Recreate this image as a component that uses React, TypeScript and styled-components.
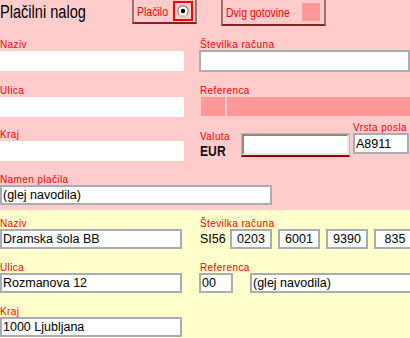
import React from "react";
import styled, { createGlobalStyle } from "styled-components";

const GlobalStyle = createGlobalStyle`
    html, body {
        margin: 0;
        padding: 0;
        background: #ffffcc;
    }
    body {
        font-family: "Liberation Sans", Arial, sans-serif;
    }
`;

const Page = styled.div`
    width: 410px;
    height: 338px;
    overflow: hidden;
    background: #ffffcc;
`;

const TopSection = styled.div`
    height: 210px;
    background: #ffcccc;
    overflow: hidden;
`;

const BottomSection = styled.div`
    padding-top: 9px;
    background: #ffffcc;
`;

const Header = styled.div`
    display: flex;
    align-items: flex-start;
    height: 40px;
`;

// narrow face is not installed, so the condensed look is squeezed by hand
const Narrow = styled.span`
    display: inline-block;
    white-space: nowrap;
    transform: scaleX(0.81);
    transform-origin: left center;
`;

const Title = styled.div`
    width: 132px;
    padding-top: 2px;
    font-size: 18px;
    line-height: 20px;
    color: #000;
`;

const ChoiceBox = styled.div<{ $w: number; $h: number }>`
    display: flex;
    align-items: center;
    box-sizing: border-box;
    width: ${(p) => p.$w}px;
    height: ${(p) => p.$h}px;
    padding: 0 2px 0 3px;
    border: 2px solid #a07070;
    border-bottom-color: #8a2020;
    border-top: none;
    font-size: 13px;
    color: #ff0000;

    ${Narrow} {
        flex: 1;
        min-width: 0;
    }
`;

const RadioFrame = styled.span`
    display: flex;
    align-items: center;
    justify-content: center;
    box-sizing: border-box;
    width: 20px;
    height: 20px;
    border: 2px solid #ff0000;
`;

const PinkSquare = styled.span`
    width: 18px;
    height: 18px;
    margin-right: 2px;
    background: #ff9999;
`;

const Row = styled.div<{ $mt?: number }>`
    display: flex;
    align-items: flex-start;
    margin-top: ${(p) => p.$mt ?? 0}px;
`;

const LeftCell = styled.div<{ $pt?: number }>`
    width: 199px;
    flex-shrink: 0;
    padding-top: ${(p) => p.$pt ?? 0}px;
`;

const RightCell = styled.div`
    flex: 1;
    display: flex;
    flex-direction: column;
`;

const Label = styled.div<{ $h?: number; $x?: number }>`
    height: ${(p) => p.$h ?? 10}px;
    padding-left: ${(p) => p.$x ?? 0}px;
    font-size: 10px;
    line-height: 10px;
    letter-spacing: 0.4px;
    color: #ff0000;
    white-space: nowrap;
`;

const Field = styled.input<{ $w: number; $h?: number; $bare?: boolean; $center?: boolean }>`
    display: block;
    box-sizing: border-box;
    width: ${(p) => p.$w}px;
    height: ${(p) => p.$h ?? 20}px;
    margin: 0;
    padding: 0 1px;
    border: ${(p) => (p.$bare ? "none" : "2px solid #a7adb2")};
    background: #fff;
    font-family: "Liberation Sans", Arial, sans-serif;
    font-size: 12.5px;
    color: #000;
    text-align: ${(p) => (p.$center ? "center" : "left")};
    outline: none;
    flex-shrink: 0;
`;

const RefBar = styled.div`
    display: flex;
    gap: 2px;
    height: 19px;
    margin-left: 2px;
`;

const RefPiece = styled.div<{ $w?: number }>`
    background: #ff9999;
    width: ${(p) => (p.$w ? `${p.$w}px` : "auto")};
    flex: ${(p) => (p.$w ? "none" : 1)};
`;

const CurrencyRow = styled.div`
    display: flex;
    align-items: flex-start;
`;

const CurrencyBlock = styled.div`
    width: 42px;
    padding-top: 9px;
`;

const Eur = styled.div`
    padding-left: 1px;
    font-weight: bold;
    font-size: 15px;
    line-height: 16px;
    color: #111;
`;

const AmountWrap = styled.div`
    margin-top: 10px;
    width: 109px;
    height: 24px;
    box-sizing: border-box;
    border: 1px solid #ff9f9f;
    border-bottom: 2px solid #990000;
    display: flex;
`;

const AmountInput = styled.input`
    flex: 1;
    min-width: 0;
    margin: 0;
    padding: 0 2px;
    box-sizing: border-box;
    border: 2px solid;
    border-color: #8a8a8a #e8e8e8 #e8e8e8 #8a8a8a;
    background: #fff;
    outline: none;
`;

const KindBlock = styled.div`
    margin-left: 3px;
`;

const AccountRow = styled.div<{ $gap?: number }>`
    display: flex;
    align-items: center;
    gap: ${(p) => p.$gap ?? 6}px;
`;

const Prefix = styled.span`
    width: 24px;
    padding-left: 1px;
    font-size: 12.5px;
    color: #000;
`;

const Radio = () => (
    <svg width="12" height="12" viewBox="0 0 12 12">
        <circle cx="6" cy="6" r="5.2" fill="#fff" stroke="#8c8c8c" strokeWidth="1.4" />
        <path d="M2.3 9.6 A5.2 5.2 0 0 0 9.7 9.6" fill="none" stroke="#e0e0e0" strokeWidth="1.2" />
        <circle cx="6" cy="6" r="2.2" fill="#000" />
    </svg>
);

export default function App() {
    return (
        <>
            <GlobalStyle />
            <Page>
                <TopSection>
                    <Header>
                        <Title><Narrow>Plačilni nalog</Narrow></Title>
                        <ChoiceBox $w={65} $h={24}>
                            <Narrow>Plačilo</Narrow>
                            <RadioFrame><Radio /></RadioFrame>
                        </ChoiceBox>
                        <ChoiceBox $w={105} $h={26} style={{ marginLeft: 24 }}>
                            <Narrow>Dvig gotovine</Narrow>
                            <PinkSquare />
                        </ChoiceBox>
                    </Header>

                    <Row>
                        <LeftCell>
                            <Label $h={11}>Naziv</Label>
                            <Field $w={184} $bare readOnly />
                        </LeftCell>
                        <RightCell>
                            <Label $x={1}>Številka računa</Label>
                            <Field $w={211} $h={22} readOnly />
                        </RightCell>
                    </Row>

                    <Row $mt={14}>
                        <LeftCell>
                            <Label $h={11}>Ulica</Label>
                            <Field $w={184} $bare readOnly />
                        </LeftCell>
                        <RightCell>
                            <Label $h={11} $x={1}>Referenca</Label>
                            <RefBar>
                                <RefPiece $w={24} />
                                <RefPiece />
                            </RefBar>
                        </RightCell>
                    </Row>

                    <Row $mt={6}>
                        <LeftCell $pt={7}>
                            <Label $h={11}>Kraj</Label>
                            <Field $w={184} $bare readOnly />
                        </LeftCell>
                        <CurrencyRow>
                            <CurrencyBlock>
                                <Label $h={11} $x={1}>Valuta</Label>
                                <Eur><Narrow>EUR</Narrow></Eur>
                            </CurrencyBlock>
                            <AmountWrap>
                                <AmountInput readOnly />
                            </AmountWrap>
                            <KindBlock>
                                <Label>Vrsta posla</Label>
                                <Field $w={56} $h={21} defaultValue="A8911" readOnly />
                            </KindBlock>
                        </CurrencyRow>
                    </Row>

                    <Row $mt={14}>
                        <div>
                            <Label>Namen plačila</Label>
                            <Field $w={272} defaultValue="(glej navodila)" readOnly />
                        </div>
                    </Row>
                </TopSection>

                <BottomSection>
                    <Row>
                        <LeftCell>
                            <Label>Naziv</Label>
                            <Field $w={182} defaultValue="Dramska šola BB" readOnly />
                        </LeftCell>
                        <RightCell>
                            <Label $x={1}>Številka računa</Label>
                            <AccountRow>
                                <Prefix>SI56</Prefix>
                                <Field $w={42} $center defaultValue="0203" readOnly />
                                <Field $w={42} $center defaultValue="6001" readOnly />
                                <Field $w={42} $center defaultValue="9390" readOnly />
                                <Field $w={42} $center defaultValue="835" readOnly />
                            </AccountRow>
                        </RightCell>
                    </Row>

                    <Row $mt={14}>
                        <LeftCell>
                            <Label>Ulica</Label>
                            <Field $w={182} defaultValue="Rozmanova 12" readOnly />
                        </LeftCell>
                        <RightCell>
                            <Label $x={1}>Referenca</Label>
                            <AccountRow $gap={17}>
                                <Field $w={34} defaultValue="00" readOnly />
                                <Field $w={165} defaultValue="(glej navodila)" readOnly />
                            </AccountRow>
                        </RightCell>
                    </Row>

                    <Row $mt={14}>
                        <LeftCell>
                            <Label>Kraj</Label>
                            <Field $w={182} defaultValue="1000 Ljubljana" readOnly />
                        </LeftCell>
                    </Row>
                </BottomSection>
            </Page>
        </>
    );
}
